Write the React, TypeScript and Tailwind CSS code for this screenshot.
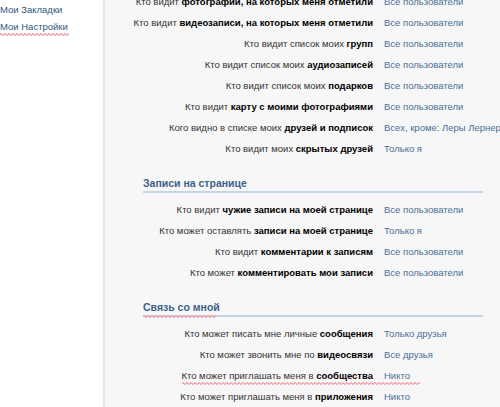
import type { ReactNode } from "react"

type Row = { pre: string; bold: string; value: string; squiggle?: boolean }

const visibility: Row[] = [
  { pre: "Кто видит ", bold: "фотографии, на которых меня отметили", value: "Все пользователи" },
  { pre: "Кто видит ", bold: "видеозаписи, на которых меня отметили", value: "Все пользователи" },
  { pre: "Кто видит список моих ", bold: "групп", value: "Все пользователи" },
  { pre: "Кто видит список моих ", bold: "аудиозаписей", value: "Все пользователи" },
  { pre: "Кто видит список моих ", bold: "подарков", value: "Все пользователи" },
  { pre: "Кто видит ", bold: "карту с моими фотографиями", value: "Все пользователи" },
  { pre: "Кого видно в списке моих ", bold: "друзей и подписок", value: "Всех, кроме: Леры Лернер" },
  { pre: "Кто видит моих ", bold: "скрытых друзей", value: "Только я" },
]

const wallPosts: Row[] = [
  { pre: "Кто видит ", bold: "чужие записи на моей странице", value: "Все пользователи" },
  { pre: "Кто может оставлять ", bold: "записи на моей странице", value: "Только я" },
  { pre: "Кто видит ", bold: "комментарии к записям", value: "Все пользователи" },
  { pre: "Кто может ", bold: "комментировать мои записи", value: "Все пользователи" },
]

const contact: Row[] = [
  { pre: "Кто может писать мне личные ", bold: "сообщения", value: "Только друзья" },
  { pre: "Кто может звонить мне по ", bold: "видеосвязи", value: "Все друзья" },
  { pre: "Кто может приглашать меня в ", bold: "сообщества", value: "Никто", squiggle: true },
  { pre: "Кто может приглашать меня в ", bold: "приложения", value: "Никто" },
]

// red spellcheck-like wave drawn under text
function Squiggle({ width, className }: { width: number; className: string }) {
  let d = "M0 2"
  for (let x = 0; x < width; x += 2) {
    d += ` L${x + 1} ${(x / 2) % 2 === 0 ? 0.5 : 2.5} L${x + 2} 1.5`
  }
  return (
    <svg width={width} height={3} className={`absolute pointer-events-none ${className}`}>
      <path d={d} fill="none" stroke="#f0a3ad" strokeWidth="1.2" />
    </svg>
  )
}

function SettingRow({ row }: { row: Row }) {
  return (
    <div className="relative flex items-center h-[21px]">
      <div className="w-[268px] shrink-0 text-right text-[#333] whitespace-nowrap">
        {row.pre}
        <b className="font-bold text-black">{row.bold}</b>
      </div>
      <div className="pl-[11px] text-[#4a6f96] whitespace-nowrap">{row.value}</div>
      {row.squiggle && <Squiggle width={238} className="left-[77px] top-[16px]" />}
    </div>
  )
}

function Section({ title, squiggle, children }: { title: string; squiggle?: boolean; children: ReactNode }) {
  return (
    <div className="mt-[16px]">
      <div className="relative ml-[38px] mr-[18px] border-b-2 border-[#c6d3e0] pb-[1px]">
        <div className="h-[14px] leading-[14px] text-[10.5px] font-bold text-[#3c6289]">{title}</div>
        {squiggle && <Squiggle width={73} className="left-0 top-[15px]" />}
      </div>
      <div className="mt-[7px]">{children}</div>
    </div>
  )
}

export default function App() {
  return (
    <div
      className="flex w-[500px] h-[407px] overflow-hidden bg-white text-[9.5px]"
      style={{ fontFamily: '"Liberation Sans", Arial, sans-serif' }}
    >
      {/* Sidebar */}
      <aside className="w-[105px] shrink-0 bg-white border-r-2 border-[#e8e8e8] pt-[2px]">
        <div className="h-[17px] leading-[15px] text-[9.5px] text-[#2f5a82]">Мои Закладки</div>
        <div className="relative h-[17px] leading-[15px] text-[9.5px] text-[#2f5a82]">
          Мои Настройки
          <Squiggle width={69} className="left-0 top-[14px]" />
        </div>
      </aside>

      {/* Main */}
      <main className="flex-1 bg-[#f7f7f7]">
        <div className="-mt-[8px]">
          {visibility.map((r) => (
            <SettingRow key={r.bold} row={r} />
          ))}
        </div>
        <Section title="Записи на странице">
          {wallPosts.map((r) => (
            <SettingRow key={r.bold} row={r} />
          ))}
        </Section>
        <Section title="Связь со мной" squiggle>
          {contact.map((r) => (
            <SettingRow key={r.bold} row={r} />
          ))}
        </Section>
      </main>
    </div>
  )
}
